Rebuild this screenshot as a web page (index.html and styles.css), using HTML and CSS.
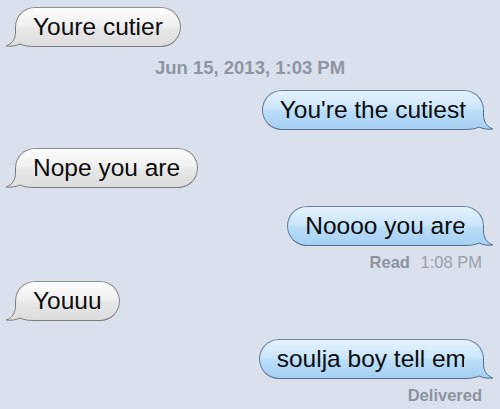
FILE: index.html
```html
<!DOCTYPE html>
<html lang="en">

<head>
    <meta charset="UTF-8">
    <meta name="viewport" content="width=device-width, initial-scale=1.0">
    <title>Messages</title>
    <link rel="stylesheet" href="styles.css">
</head>

<body>
    <!-- shared gradients for the bubble tails -->
    <svg class="defs" aria-hidden="true">
        <defs>
            <linearGradient id="grayFill" x1="0" y1="-16" x2="0" y2="24" gradientUnits="userSpaceOnUse">
                <stop offset="0" stop-color="#fdfdfd" />
                <stop offset="0.45" stop-color="#f0f0f0" />
                <stop offset="0.55" stop-color="#e7e7e7" />
                <stop offset="1" stop-color="#dcdcdc" />
            </linearGradient>
            <linearGradient id="blueFill" x1="0" y1="-16" x2="0" y2="24" gradientUnits="userSpaceOnUse">
                <stop offset="0" stop-color="#e4f2fd" />
                <stop offset="0.45" stop-color="#cbe6fb" />
                <stop offset="0.55" stop-color="#b9ddf8" />
                <stop offset="1" stop-color="#a5cff2" />
            </linearGradient>
        </defs>
    </svg>

    <div class="thread">
        <div class="msg in">
            <div class="bubble">Youre cutier
                <svg class="tail" viewBox="0 0 30 24"><path class="fill" d="M10 4 L10 9 C10 16 7 20.5 1 23 C6 24 11 23.3 15 21.3 C19 23.3 24 24 30 24 L30 4 Z" /><path class="line" d="M10.5 4 L10.5 9 C10.5 16 7.2 20.6 1.2 23 C6 23.6 11 23 15 21 C19 23 24 23.5 30 23.5" /></svg>
            </div>
        </div>

        <p class="stamp">Jun 15, 2013, 1:03 PM</p>

        <div class="msg out">
            <div class="bubble">You're the cutiest
                <svg class="tail" viewBox="0 0 30 24"><path class="fill" d="M10 4 L10 9 C10 16 7 20.5 1 23 C6 24 11 23.3 15 21.3 C19 23.3 24 24 30 24 L30 4 Z" /><path class="line" d="M10.5 4 L10.5 9 C10.5 16 7.2 20.6 1.2 23 C6 23.6 11 23 15 21 C19 23 24 23.5 30 23.5" /></svg>
            </div>
        </div>

        <div class="msg in">
            <div class="bubble">Nope you are
                <svg class="tail" viewBox="0 0 30 24"><path class="fill" d="M10 4 L10 9 C10 16 7 20.5 1 23 C6 24 11 23.3 15 21.3 C19 23.3 24 24 30 24 L30 4 Z" /><path class="line" d="M10.5 4 L10.5 9 C10.5 16 7.2 20.6 1.2 23 C6 23.6 11 23 15 21 C19 23 24 23.5 30 23.5" /></svg>
            </div>
        </div>

        <div class="msg out">
            <div class="bubble">Noooo you are
                <svg class="tail" viewBox="0 0 30 24"><path class="fill" d="M10 4 L10 9 C10 16 7 20.5 1 23 C6 24 11 23.3 15 21.3 C19 23.3 24 24 30 24 L30 4 Z" /><path class="line" d="M10.5 4 L10.5 9 C10.5 16 7.2 20.6 1.2 23 C6 23.6 11 23 15 21 C19 23 24 23.5 30 23.5" /></svg>
            </div>
        </div>
        <p class="status"><b>Read</b> <span>1:08 PM</span></p>

        <div class="msg in">
            <div class="bubble">Youuu
                <svg class="tail" viewBox="0 0 30 24"><path class="fill" d="M10 4 L10 9 C10 16 7 20.5 1 23 C6 24 11 23.3 15 21.3 C19 23.3 24 24 30 24 L30 4 Z" /><path class="line" d="M10.5 4 L10.5 9 C10.5 16 7.2 20.6 1.2 23 C6 23.6 11 23 15 21 C19 23 24 23.5 30 23.5" /></svg>
            </div>
        </div>

        <div class="msg out">
            <div class="bubble">soulja boy tell em
                <svg class="tail" viewBox="0 0 30 24"><path class="fill" d="M10 4 L10 9 C10 16 7 20.5 1 23 C6 24 11 23.3 15 21.3 C19 23.3 24 24 30 24 L30 4 Z" /><path class="line" d="M10.5 4 L10.5 9 C10.5 16 7.2 20.6 1.2 23 C6 23.6 11 23 15 21 C19 23 24 23.5 30 23.5" /></svg>
            </div>
        </div>
        <p class="status"><b>Delivered</b></p>
    </div>
</body>

</html>
```

FILE: styles.css
```css
body {
    margin: 0;
    font-family: "Liberation Sans", Arial, sans-serif;
    background-color: #dbe1ec;
}

.defs {
    position: absolute;
    width: 0;
    height: 0;
}

.thread {
    padding-top: 7px;
}

.msg {
    display: flex;
}

.msg + .msg {
    margin-top: 18px;
}

.msg.in {
    justify-content: flex-start;
    padding-left: 15px;
}

.msg.out {
    justify-content: flex-end;
    padding-right: 16px;
}

.bubble {
    position: relative;
    height: 38px;
    line-height: 38px;
    padding: 0 17px;
    border: 1px solid;
    border-radius: 20px;
    font-size: 24.5px;
    color: #0d0d0d;
    white-space: nowrap;
}

.in .bubble {
    background: linear-gradient(#fdfdfd, #f0f0f0 45%, #e7e7e7 55%, #dcdcdc);
    border-color: #8e8e8e #8a8a8a #7c7c7c;
}

.out .bubble {
    background: linear-gradient(#e4f2fd, #cbe6fb 45%, #b9ddf8 55%, #a5cff2);
    border-color: #6a84a2 #62809f #546f8e;
}

.tail {
    position: absolute;
    bottom: -1px;
    width: 30px;
    height: 24px;
}

.in .tail {
    left: -11px;
}

.out .tail {
    right: -11px;
    transform: scaleX(-1);
}

.tail .line {
    fill: none;
    stroke-width: 1;
}

.in .tail .fill {
    fill: url(#grayFill);
}

.in .tail .line {
    stroke: #7c7c7c;
}

.out .tail .fill {
    fill: url(#blueFill);
}

.out .tail .line {
    stroke: #546f8e;
}

.stamp {
    margin: 12px 0 13px;
    line-height: 18px;
    text-align: center;
    font-size: 18.5px;
    font-weight: bold;
    color: #8e95a3;
}

.status {
    margin: 7px 0 10px;
    padding-right: 18px;
    line-height: 18px;
    text-align: right;
    font-size: 16.5px;
    color: #9aa0a9;
}

.status b {
    color: #8c939e;
}

.status span {
    margin-left: 6px;
}
```
